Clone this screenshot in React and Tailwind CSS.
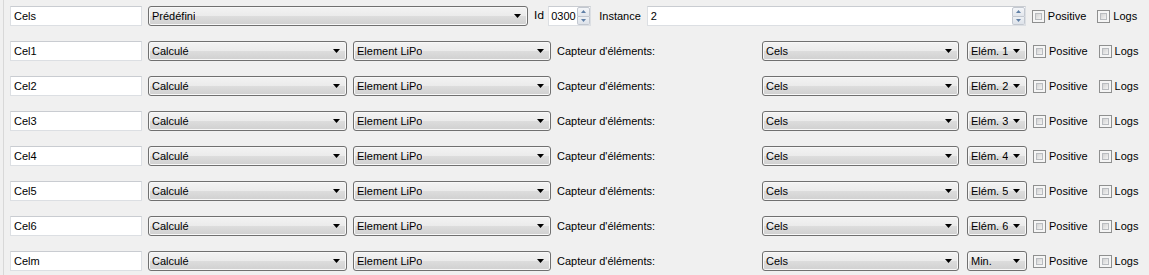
const rows = [
  { name: "Cel1", elem: "Elém. 1" },
  { name: "Cel2", elem: "Elém. 2" },
  { name: "Cel3", elem: "Elém. 3" },
  { name: "Cel4", elem: "Elém. 4" },
  { name: "Cel5", elem: "Elém. 5" },
  { name: "Cel6", elem: "Elém. 6" },
  { name: "Celm", elem: "Min." },
];

function TextBox({ value, className = "" }) {
  return (
    <div
      className={`h-[20px] flex items-center bg-white border border-[#dcdfe3] border-t-[#c9ccd1] pl-[3px] text-black ${className}`}
    >
      {value}
    </div>
  );
}

function Combo({ value, className = "" }) {
  return (
    <div
      className={`h-[20px] flex items-center justify-between rounded-[3px] border border-[#707070] bg-[linear-gradient(#f3f3f3,#ebebeb_50%,#dddddd_50%,#d0d0d0)] shadow-[inset_0_0_0_1px_#f8f8f8] pl-[3px] pr-[6px] text-black ${className}`}
    >
      <span className="truncate">{value}</span>
      <svg width="7" height="4" viewBox="0 0 7 4" className="shrink-0">
        <path d="M0 0h7L3.5 4z" fill="#000" />
      </svg>
    </div>
  );
}

function Spinner() {
  return (
    <div className="flex flex-col w-[13px] h-[18px] shrink-0">
      <div className="flex-1 flex items-center justify-center border border-[#c3c8d0] bg-[linear-gradient(#f4f6f9,#e2e6ec)] rounded-t-[2px]">
        <svg width="5" height="3" viewBox="0 0 5 3">
          <path d="M0 3h5L2.5 0z" fill="#5f7fa6" />
        </svg>
      </div>
      <div className="flex-1 flex items-center justify-center border border-t-0 border-[#c3c8d0] bg-[linear-gradient(#eef1f5,#dde2e9)] rounded-b-[2px]">
        <svg width="5" height="3" viewBox="0 0 5 3">
          <path d="M0 0h5L2.5 3z" fill="#5f7fa6" />
        </svg>
      </div>
    </div>
  );
}

function Check({ label, className = "" }) {
  return (
    <div className={`flex items-center gap-[3px] ${className}`}>
      <div className="w-[13px] h-[13px] border border-[#8e8f8f] bg-[#f5f5f5] p-[2px] shrink-0">
        <div className="w-full h-full border border-[#b9bcc0] bg-[linear-gradient(135deg,#d3d3d3,#f3f3f3)]" />
      </div>
      <span>{label}</span>
    </div>
  );
}

export default function App() {
  return (
    <div
      className="w-[1149px] h-[275px] bg-[#f0f0f0] pl-[3px] text-[11px] text-black overflow-hidden"
      style={{ fontFamily: '"Liberation Sans", Arial, sans-serif' }}
    >
      <div className="h-full border-l border-[#d8d8d8] pl-[6px] pt-[6px] flex flex-col gap-[15px]">
        <div className="flex items-center h-[20px]">
          <TextBox value="Cels" className="w-[132px]" />
          <Combo value="Prédéfini" className="w-[380px] ml-[6px]" />
          <span className="ml-[6px]" style={{ fontFamily: '"DejaVu Sans", sans-serif', fontSize: "11px" }}>Id</span>
          <div className="ml-[4px] w-[43px] h-[20px] flex items-center justify-between bg-white border border-[#dcdfe3] border-t-[#c9ccd1] pl-[2px] pr-[0px]">
            <span>0300</span>
            <Spinner />
          </div>
          <span className="ml-[8px]">Instance</span>
          <div className="ml-[6px] w-[379px] h-[20px] flex items-center justify-between bg-white border border-[#dcdfe3] border-t-[#c9ccd1] pl-[3px]">
            <span>2</span>
            <Spinner />
          </div>
          <Check label="Positive" className="ml-[6px]" />
          <Check label="Logs" className="ml-[11px]" />
        </div>
        {rows.map((r) => (
          <div key={r.name} className="flex items-center h-[20px]">
            <TextBox value={r.name} className="w-[132px]" />
            <Combo value="Calculé" className="w-[199px] ml-[6px]" />
            <Combo value="Element LiPo" className="w-[198px] ml-[6px]" />
            <span className="ml-[6px] w-[205px]">Capteur d'éléments:</span>
            <Combo value="Cels" className="w-[197px]" />
            <Combo value={r.elem} className="w-[60px] ml-[8px]" />
            <Check label="Positive" className="ml-[6px]" />
            <Check label="Logs" className="ml-[11px]" />
          </div>
        ))}
      </div>
    </div>
  );
}
